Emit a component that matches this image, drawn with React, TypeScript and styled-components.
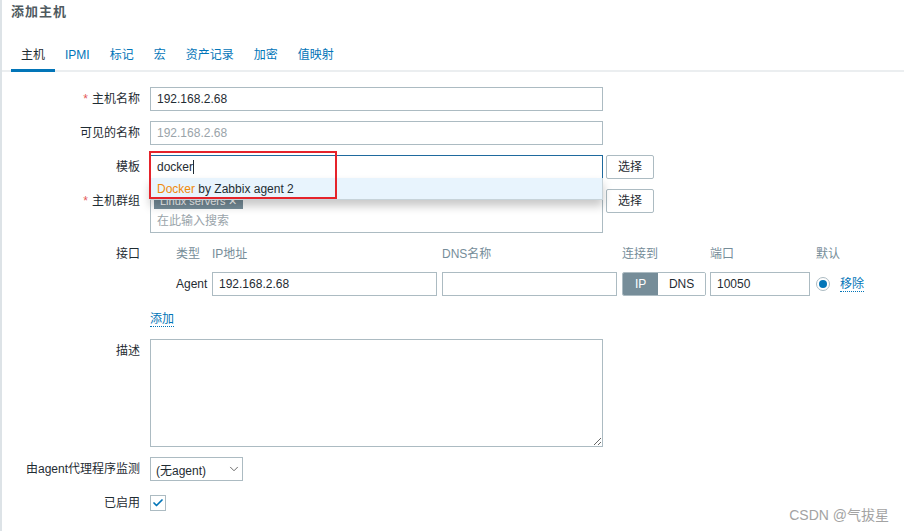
import styled, { createGlobalStyle } from "styled-components";
import { ChevronDown, Check } from "lucide-react";

const GlobalStyle = createGlobalStyle`
  html, body {
    margin: 0;
    padding: 0;
    background: #ffffff;
  }
  body {
    font-family: "Liberation Sans", Arial, "Noto Sans CJK SC", sans-serif;
    font-size: 12px;
    color: #1f2c33;
  }
  * { box-sizing: border-box; }
`;

const Page = styled.div`
  position: relative;
  width: 904px;
  height: 531px;
  border-left: 2px solid #dde3e7;
  overflow: hidden;
`;

const Title = styled.h1`
  margin: 0;
  padding: 3px 0 0 9px;
  height: 24px;
  font-size: 13px;
  font-weight: bold;
  line-height: 18px;
  color: #4f5a60;
  letter-spacing: 1px;
`;

const TabBar = styled.div`
  display: flex;
  margin: 18px 0 0 0;
  padding-left: 9px;
  height: 30px;
  border-bottom: 2px solid #ebeef0;
`;

const Tab = styled.div<{ $active?: boolean }>`
  position: relative;
  padding: 4px 10px 0;
  line-height: 18px;
  font-size: 12px;
  color: ${(p) => (p.$active ? "#1f2c33" : "#0275b8")};

  &::after {
    content: "";
    display: ${(p) => (p.$active ? "block" : "none")};
    position: absolute;
    left: 0;
    right: 0;
    bottom: -2px;
    height: 3px;
    background: #0275b8;
  }
`;

const Form = styled.div`
  display: flex;
  flex-direction: column;
  padding-top: 15px;
`;

const Row = styled.div<{ $gap?: number; $top?: boolean }>`
  display: flex;
  align-items: ${(p) => (p.$top ? "flex-start" : "center")};
  margin-bottom: ${(p) => p.$gap ?? 10}px;
`;

const Label = styled.div<{ $pad?: number }>`
  width: 148px;
  flex: none;
  padding-right: 10px;
  padding-top: ${(p) => p.$pad ?? 0}px;
  text-align: right;
  line-height: 24px;
  white-space: nowrap;
`;

const Req = styled.span`
  color: #e45959;
  margin-right: 4px;
`;

const Field = styled.div`
  position: relative;
  display: flex;
  align-items: center;
  gap: 3px;
`;

const TextBox = styled.div<{ $w?: number; $focus?: boolean; $muted?: boolean }>`
  width: ${(p) => p.$w ?? 453}px;
  height: 24px;
  border: 1px solid ${(p) => (p.$focus ? "#1f6a9e" : "#acbbc2")};
  background: #fff;
  padding: 0 6px;
  line-height: 22px;
  color: ${(p) => (p.$muted ? "#9aa4aa" : "#1f2c33")};
  white-space: nowrap;
`;

const Caret = styled.span`
  display: inline-block;
  width: 1px;
  height: 14px;
  background: #1f2c33;
  vertical-align: -3px;
`;

const Suggest = styled.div`
  position: absolute;
  left: 0;
  top: 23px;
  width: 453px;
  height: 22px;
  background: #e8f4fd;
  border: 1px solid #c7d3d9;
  border-top: none;
  padding: 1px 6px 0;
  line-height: 21px;
  box-shadow: 0 6px 10px rgba(0, 0, 0, 0.22);
  z-index: 3;
`;

const Match = styled.span`
  color: #f08a0a;
`;

const Highlight = styled.div`
  position: absolute;
  left: -1px;
  top: -4px;
  width: 188px;
  height: 48px;
  border: 2px solid #e5232b;
  z-index: 4;
`;

const Button = styled.div<{ $top?: boolean }>`
  align-self: ${(p) => (p.$top ? "flex-start" : "center")};
  width: 48px;
  height: 24px;
  border: 1px solid #acbbc2;
  border-radius: 2px;
  background: #fff;
  text-align: center;
  line-height: 22px;
  color: #1f2c33;
`;

const MultiSelect = styled.div`
  width: 453px;
  height: 44px;
  border: 1px solid #acbbc2;
  padding: 2px 3px;
  display: flex;
  flex-direction: column;
  gap: 4px;
`;

const Chip = styled.span`
  align-self: flex-start;
  background: #768d99;
  color: #fff;
  padding: 0 6px;
  height: 16px;
  line-height: 16px;
  font-size: 11px;
  margin-top: 1px;
`;

const Placeholder = styled.span`
  color: #9aa4aa;
  padding-left: 3px;
  line-height: 16px;
`;

const IfaceTable = styled.div`
  display: grid;
  grid-template-columns: 62px 230px 180px 88px 106px auto;
  row-gap: 10px;
  align-items: center;
`;

const Head = styled.div<{ $indent?: number }>`
  color: #768d99;
  line-height: 16px;
  padding-left: ${(p) => p.$indent ?? 0}px;
`;

const TypeCell = styled.div`
  padding-left: 26px;
`;

const Toggle = styled.div`
  display: flex;
  width: 84px;
  height: 24px;
  border: 1px solid #acbbc2;
  border-radius: 2px;
  overflow: hidden;
`;

const ToggleItem = styled.div<{ $on?: boolean }>`
  width: ${(p) => (p.$on ? 36 : 48)}px;
  text-align: center;
  line-height: 22px;
  background: ${(p) => (p.$on ? "#768d99" : "#fff")};
  color: ${(p) => (p.$on ? "#fff" : "#1f2c33")};
`;

const DefaultCell = styled.div`
  display: flex;
  align-items: center;
  gap: 10px;
`;

const Radio = styled.span`
  width: 14px;
  height: 14px;
  border-radius: 50%;
  border: 1px solid #acbbc2;
  display: flex;
  align-items: center;
  justify-content: center;

  &::before {
    content: "";
    width: 8px;
    height: 8px;
    border-radius: 50%;
    background: #0275b8;
  }
`;

const Link = styled.span`
  color: #0275b8;
  border-bottom: 1px dotted #0275b8;
  line-height: 14px;
`;

const Spacer = styled.div`
  width: 148px;
  flex: none;
`;

const TextArea = styled.textarea`
  width: 453px;
  height: 108px;
  border: 1px solid #acbbc2;
  margin: 0;
  display: block;
  font: inherit;
`;

const Select = styled.div`
  width: 93px;
  height: 24px;
  border: 1px solid #acbbc2;
  display: flex;
  align-items: center;
  justify-content: space-between;
  padding: 0 1px 0 5px;
  color: #1f2c33;
`;

const CheckBox = styled.span`
  width: 16px;
  height: 16px;
  border: 1px solid #acbbc2;
  display: flex;
  align-items: center;
  justify-content: center;
  color: #0275b8;
`;

const Watermark = styled.div`
  position: absolute;
  right: 15px;
  bottom: 7px;
  font-size: 14px;
  color: #a3a3a3;
`;

export default function App() {
  return (
    <>
      <GlobalStyle />
      <Page>
        <Title>添加主机</Title>
        <TabBar>
          <Tab $active>主机</Tab>
          <Tab>IPMI</Tab>
          <Tab>标记</Tab>
          <Tab>宏</Tab>
          <Tab>资产记录</Tab>
          <Tab>加密</Tab>
          <Tab>值映射</Tab>
        </TabBar>
        <Form>
          <Row>
            <Label>
              <Req>*</Req>主机名称
            </Label>
            <Field>
              <TextBox>192.168.2.68</TextBox>
            </Field>
          </Row>
          <Row>
            <Label>可见的名称</Label>
            <Field>
              <TextBox $muted>192.168.2.68</TextBox>
            </Field>
          </Row>
          <Row>
            <Label>模板</Label>
            <Field>
              <TextBox $focus>
                docker<Caret />
              </TextBox>
              <Button>选择</Button>
              <Suggest>
                <Match>Docker</Match> by Zabbix agent 2
              </Suggest>
              <Highlight />
            </Field>
          </Row>
          <Row $top $gap={13}>
            <Label>
              <Req>*</Req>主机群组
            </Label>
            <Field>
              <MultiSelect>
                <Chip>Linux servers ✕</Chip>
                <Placeholder>在此输入搜索</Placeholder>
              </MultiSelect>
              <Button $top>选择</Button>
            </Field>
          </Row>
          <Row $top $gap={16}>
            <Label style={{ lineHeight: "16px" }}>接口</Label>
            <IfaceTable>
              <Head $indent={26}>类型</Head>
              <Head>IP地址</Head>
              <Head>DNS名称</Head>
              <Head>连接到</Head>
              <Head>端口</Head>
              <Head>默认</Head>
              <TypeCell>Agent</TypeCell>
              <TextBox $w={225}>192.168.2.68</TextBox>
              <TextBox $w={175} />
              <Toggle>
                <ToggleItem $on>IP</ToggleItem>
                <ToggleItem>DNS</ToggleItem>
              </Toggle>
              <TextBox $w={100}>10050</TextBox>
              <DefaultCell>
                <Radio />
                <Link>移除</Link>
              </DefaultCell>
            </IfaceTable>
          </Row>
          <Row $gap={12}>
            <Spacer />
            <Link>添加</Link>
          </Row>
          <Row $top $gap={10}>
            <Label>描述</Label>
            <TextArea />
          </Row>
          <Row>
            <Label>由agent代理程序监测</Label>
            <Select>
              <span>(无agent)</span>
              <ChevronDown size={14} strokeWidth={1.5} color="#555" />
            </Select>
          </Row>
          <Row>
            <Label>已启用</Label>
            <CheckBox>
              <Check size={12} strokeWidth={3.5} />
            </CheckBox>
          </Row>
        </Form>
        <Watermark>CSDN @气拔星</Watermark>
      </Page>
    </>
  );
}
